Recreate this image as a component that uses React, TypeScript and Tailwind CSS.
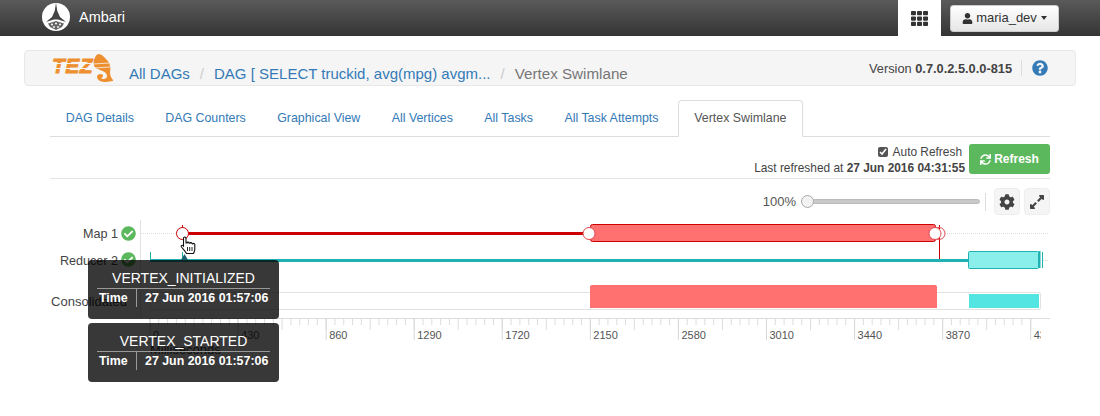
import { FaCheckCircle, FaCog, FaExpandAlt, FaQuestionCircle, FaSync, FaTh, FaUser } from "react-icons/fa";

const tabs = ["DAG Details", "DAG Counters", "Graphical View", "All Vertices", "All Tasks", "All Task Attempts"];
const axisLabels = ["0", "430", "860", "1290", "1720", "2150", "2580", "3010", "3440", "3870", "4300"];

function AmbariLogo() {
  return (
    <svg width="28" height="28" viewBox="0 0 28 28" className="mb-[2px]">
      <circle cx="14" cy="14" r="14" fill="#fff" />
      <path d="M14 0 L15.3 8 L18 14 L24 19 L16 16.5 L12 16.5 L4 19 L10 14 L12.7 8 Z" fill="#444" />
      <path d="M6 20.5 L14 18 L22 20.5 L20 24 L14 27 L8 24 Z" fill="#666" />
      <circle cx="10" cy="21.5" r="1" fill="#fff" />
      <circle cx="14" cy="20.5" r="1" fill="#fff" />
      <circle cx="18" cy="21.5" r="1" fill="#fff" />
      <circle cx="12" cy="24" r="0.9" fill="#fff" />
      <circle cx="16" cy="24" r="0.9" fill="#fff" />
    </svg>
  );
}

function TezLogo() {
  return (
    <div className="relative flex items-start w-[62px] h-[28px]">
      <span className="mt-[2px] text-[21px] leading-[20px] font-black italic tracking-[0.5px] text-[#ee8f2f] [-webkit-text-stroke:0.8px_#ee8f2f] font-['Liberation_Sans',sans-serif]">TEZ</span>
      <svg width="22" height="28" viewBox="0 0 22 28" className="ml-[-1px] shrink-0">
        <path d="M6 0 C10 0 12 3 15 6 C18 9 19 14 18 18 C18 21 19 24 21 26 L21 27 L14 28 C9 28 5 26 5 23 C5 20 9 19 11 21 C11 23 10 24 9 24 C11 26 15 25 15 22 C15 18 10 17 6 15 C2 14 1 10 2 6 C3 3 4 1 6 0 Z" fill="#ee8f2f" />
        <path d="M1 10 L17 9 M2 14 L18 13" stroke="#f5f5f5" strokeWidth="0.8" />
      </svg>
      <div className="absolute left-0 top-[9px] w-[40px] h-px bg-[#f5f5f5]" />
      <div className="absolute left-0 top-[14px] w-[40px] h-px bg-[#f5f5f5]" />
    </div>
  );
}

function Timeline() {
  const majors = Array.from({ length: 11 }, (_, i) => 150 + i * 88.07);
  const minors = Array.from({ length: 101 }, (_, i) => 150 + i * 8.807);
  return (
    <svg width="1100" height="140" viewBox="0 218 1100 140" className="block">
      <defs>
        <clipPath id="axis-clip">
          <rect x="140" y="310" width="901" height="40" />
        </clipPath>
      </defs>
      <line x1="140.5" y1="220" x2="140.5" y2="318" stroke="#e2e2e2" />
      <line x1="141" y1="233.5" x2="176" y2="233.5" stroke="#ddd" strokeDasharray="1 1" />
      <line x1="945" y1="233.5" x2="1049" y2="233.5" stroke="#ddd" strokeDasharray="1 1" />
      <line x1="1043" y1="260.5" x2="1049" y2="260.5" stroke="#ddd" strokeDasharray="1 1" />

      <text x="118" y="238" textAnchor="end" fontSize="12.6" fill="#444">Map 1</text>
      <text x="118" y="265" textAnchor="end" fontSize="12.6" fill="#444">Reducer 2</text>
      <text x="127" y="306" textAnchor="end" fontSize="13" fill="#444">Consolidated</text>

      <rect x="150.5" y="292.5" width="890" height="17" rx="1" fill="#fff" stroke="#e2e2e2" strokeWidth="1" />
      <path d="M590 287 Q590 285 592 285 L935 285 Q937 285 937 287 L937 308 L590 308 Z" fill="#ff7070" />
      <rect x="969" y="294" width="70" height="14" fill="#52e5e2" />

      <line x1="182.5" y1="225" x2="182.5" y2="228" stroke="#cc0000" />
      <line x1="182" y1="233.5" x2="590" y2="233.5" stroke="#cc0000" strokeWidth="3" />
      <rect x="590.5" y="224.5" width="345" height="17" rx="2" fill="#ff7070" stroke="#cc0000" />
      <line x1="939.5" y1="225" x2="939.5" y2="260" stroke="#cc0000" />
      <circle cx="939" cy="233.5" r="6" fill="none" stroke="#e0484f" />
      <circle cx="182.5" cy="233.5" r="6" fill="#fff" stroke="#cc0000" />
      <circle cx="589" cy="233.5" r="6" fill="#fff" stroke="#e0484f" />
      <circle cx="935" cy="233.5" r="6" fill="#fff" stroke="#e0484f" />

      <line x1="150" y1="260.5" x2="968" y2="260.5" stroke="#20b2b2" strokeWidth="3" />
      <line x1="150.5" y1="252" x2="150.5" y2="262" stroke="#20b2b2" />
      <line x1="182.5" y1="252" x2="182.5" y2="262" stroke="#20b2b2" />
      <path d="M184.5 254 L188 260 L181 260 Z" fill="#1d5f70" />
      <rect x="968.5" y="251.5" width="70" height="17" rx="1" fill="#8aeeea" stroke="#20b2b2" />
      <line x1="1039.5" y1="251" x2="1039.5" y2="268" stroke="#20b2b2" strokeWidth="2" />
      <line x1="1042.5" y1="252" x2="1042.5" y2="268" stroke="#20b2b2" />

      <line x1="150" y1="318.5" x2="1050" y2="318.5" stroke="#ddd" />
      <g clipPath="url(#axis-clip)">
        {minors.map((x, i) => (
          <line key={x} x1={x} y1="318" x2={x} y2={i % 5 === 0 ? 330 : 325} stroke="#ddd" />
        ))}
        {majors.map((x) => (
          <line key={x} x1={x} y1="318" x2={x} y2="340" stroke="#d8d8d8" />
        ))}
        {axisLabels.map((label, i) => (
          <text key={label} x={majors[i] + 3} y="339" fontSize="11" fill="#555">{label}</text>
        ))}
      </g>
      <text x="150" y="354" fontSize="13" fill="#444">Milliseconds</text>
    </svg>
  );
}

function HandCursor() {
  return (
    <svg width="16" height="20" viewBox="0 0 16 20" className="absolute left-[180px] top-[236px]">
      <path
        d="M3.5 2 C3.5 0.7 6 0.7 6 2 L6 7 L7 7 C7 5.8 9 5.8 9 7 L9.8 7.3 C10 6.2 12 6.4 12 7.7 L12.8 8 C13 7 14.8 7.3 14.8 8.6 L14.8 13 C14.8 15 14 16 13.5 17.5 L6.5 17.5 C5.5 15.5 3.5 13.5 1.5 11 C0.5 9.6 2 8.4 3.5 10 Z"
        fill="#fff"
        stroke="#111"
        strokeWidth="1.1"
      />
      <path d="M7.5 11 V15 M9.7 11 V15 M12 11 V15" stroke="#111" strokeWidth="0.9" />
    </svg>
  );
}

function Tip({ title, top }: { title: string; top: string }) {
  return (
    <div className={`absolute left-[88px] w-[191px] h-[59px] rounded-[4px] bg-black/[.78] px-[9px] pt-[8px] text-white ${top}`}>
      <div className="text-center text-[14px] leading-[20px] border-b border-[#999]">{title}</div>
      <div className="flex items-center h-[18px] text-[12.4px] font-bold leading-[18px]">
        <span className="w-[40px] pl-[2px] border-r border-[#999]">Time</span>
        <span className="ml-[8px]">27 Jun 2016 01:57:06</span>
      </div>
    </div>
  );
}

export default function App() {
  return (
    <div className="relative w-[1100px] h-[416px] overflow-hidden bg-white text-[13px] text-[#444] font-['Liberation_Sans',Arial,sans-serif]">
      <header className="flex items-center h-9 pl-[42px] bg-gradient-to-b from-[#5a5a5a] to-[#353535]">
        <AmbariLogo />
        <span className="ml-[9px] text-[14.5px] font-medium text-white">Ambari</span>
        <div className="ml-auto flex items-center self-stretch w-[43px] justify-center bg-white text-[#333]">
          <FaTh size={17} />
        </div>
        <button className="flex items-center justify-center ml-[9px] mr-[41px] w-[109px] h-[27px] rounded-[3px] border border-[#ccc] bg-gradient-to-b from-white to-[#e6e6e6] text-[13px] text-[#333]">
          <FaUser size={11} className="mr-[3px]" />
          maria_dev
          <span className="ml-[4px] border-x-[3.5px] border-t-[4px] border-x-transparent border-t-[#333]" />
        </button>
      </header>

      <nav className="flex items-center h-[36px] mx-[24px] mt-[14px] pl-[27px] pr-[27px] rounded-[4px] border border-[#e8e8e8] bg-[#f5f5f5]">
        <TezLogo />
        <div className="flex items-center ml-[15px] mt-[12px] text-[15px] text-[#337ab7]">
          <span>All DAGs</span>
          <span className="px-[10px] text-[#ccc]">/</span>
          <span>DAG [ SELECT truckid, avg(mpg) avgm...</span>
          <span className="px-[10px] text-[#ccc]">/</span>
          <span className="text-[#777] text-[15.2px]">Vertex Swimlane</span>
        </div>
        <div className="ml-auto flex items-center">
          <span className="mt-[2px] text-[12.8px] text-[#444]">Version <b>0.7.0.2.5.0.0-815</b></span>
          <div className="w-px h-[16px] mx-[9px] bg-[#ddd]" />
          <FaQuestionCircle size={16} className="text-[#337ab7] ml-[1px]" />
        </div>
      </nav>

      <div className="flex h-[37px] mx-[50px] mt-[14px] border-b border-[#ddd]">
        {tabs.map((tab) => (
          <div key={tab} className="flex items-center px-[15.7px] text-[12.4px] text-[#337ab7]">{tab}</div>
        ))}
        <div className="flex items-center h-[37px] ml-[4px] px-[15px] bg-white border border-[#ddd] border-b-white rounded-t-[4px] text-[12.4px] text-[#555]">
          Vertex Swimlane
        </div>
      </div>

      <div className="flex justify-end items-center h-[42px] mx-[50px] border-b border-[#e5e5e5]">
        <div className="flex flex-col items-end text-[11.9px] leading-[16px] mt-[5px]">
          <label className="flex items-center text-[#444] mr-[3px]">
            <input type="checkbox" readOnly checked className="w-[10px] h-[10px] mr-[5px] accent-[#555]" />
            Auto Refresh
          </label>
          <span>Last refreshed at <b>27 Jun 2016 04:31:55</b></span>
        </div>
        <button className="flex items-center justify-center ml-[4px] mt-[3px] w-[81px] h-[30px] rounded-[3px] bg-[#5cb85c] text-[12px] font-bold text-white">
          <FaSync size={11} className="mr-[3px]" />
          Refresh
        </button>
      </div>

      <div className="flex justify-end items-center h-[27px] mt-[9px] mx-[50px]">
        <span className="text-[13px] text-[#555]">100%</span>
        <div className="relative w-[179px] h-[13px] ml-[5px] flex items-center">
          <div className="w-full h-[5px] rounded-[3px] border border-[#bbb] bg-[#c8c8c8]" />
          <div className="absolute left-0 w-[13px] h-[13px] rounded-full border border-[#aaa] bg-[#f2f2f2]" />
        </div>
        <div className="w-px h-[18px] mx-[5px] bg-[#ddd]" />
        <div className="flex items-center justify-center ml-[3px] w-[26px] h-[27px] rounded-[4px] border border-[#eee] bg-[#f5f5f5] text-[#444]">
          <FaCog size={16} />
        </div>
        <div className="flex items-center justify-center ml-[4px] w-[26px] h-[27px] rounded-[4px] border border-[#eee] bg-[#f5f5f5] text-[#444]">
          <FaExpandAlt size={16} />
        </div>
      </div>

      <div className="mt-[3px]">
        <Timeline />
      </div>

      <FaCheckCircle size={15} className="absolute left-[121px] top-[226px] text-[#5cb85c]" />
      <FaCheckCircle size={15} className="absolute left-[121px] top-[252px] text-[#5cb85c]" />
      <HandCursor />
      <Tip title="VERTEX_INITIALIZED" top="top-[260px]" />
      <Tip title="VERTEX_STARTED" top="top-[323px]" />
    </div>
  );
}
